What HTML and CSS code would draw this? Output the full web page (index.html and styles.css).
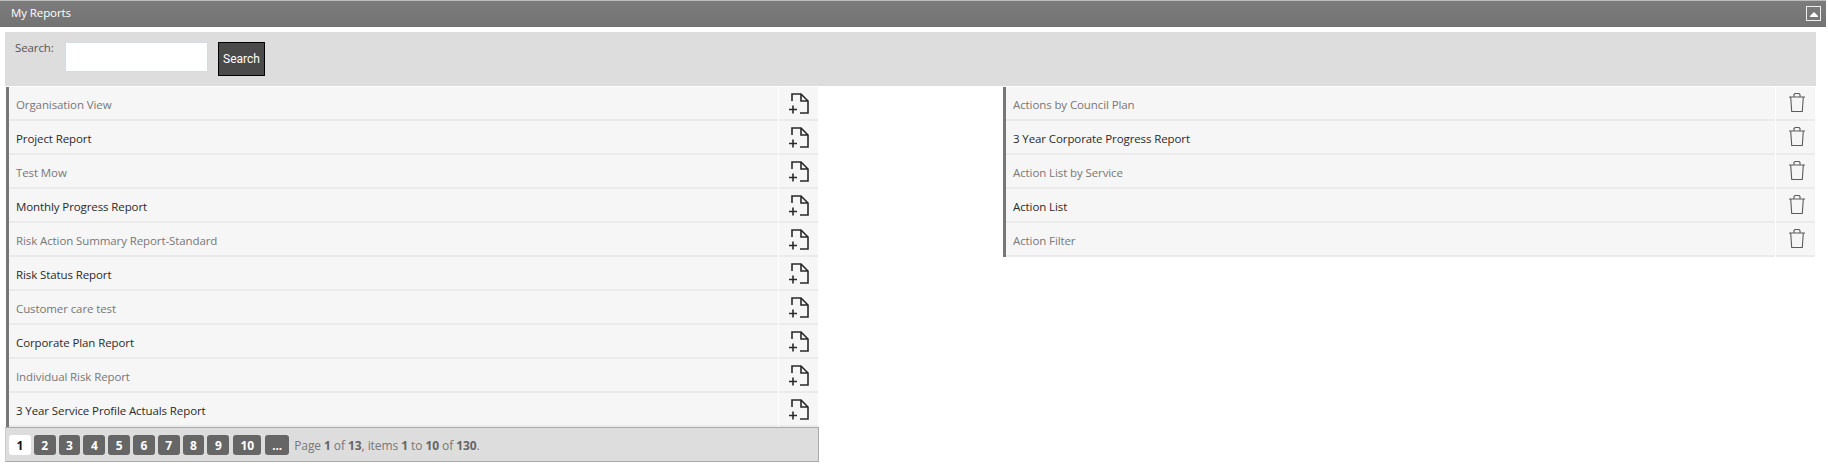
FILE: index.html
```html
<!DOCTYPE html>
<html lang="en">
<head>
<meta charset="utf-8">
<title>My Reports</title>
<link rel="stylesheet" href="styles.css">
</head>
<body>
<svg class="defs" width="0" height="0" aria-hidden="true">
  <symbol id="add" viewBox="0 0 22 22">
    <path d="M4 9V2h9l7 7v12h-8M13 2v7h7M1 17.500h8M5 13.500v8" fill="none" stroke="#2a2a2a" stroke-width="1.600"/>
  </symbol>
  <symbol id="bin" viewBox="0 0 18 21">
    <path d="M1 5h16M6 5V2.500L7 1.500h4l1 1V5M2.700 5l1 14.500h10.600l1-14.500" fill="none" stroke="#5c5c5c" stroke-width="1.100"/>
  </symbol>
</svg>
<header class="bar">
  <span class="bar-title">My Reports</span>
  <span class="collapse"><span class="caret"></span></span>
</header>
<section class="search">
  <label class="search-label" for="q">Search:</label>
  <input class="search-input" id="q" type="text">
  <button class="search-btn" type="button">Search</button>
</section>
<main class="columns">
  <div class="col">
    <ul class="list">
      <li class="row"><span class="name alt">Organisation View</span><span class="cell"><svg class="i-add"><use href="#add"/></svg></span></li>
      <li class="row"><span class="name">Project Report</span><span class="cell"><svg class="i-add"><use href="#add"/></svg></span></li>
      <li class="row"><span class="name alt">Test Mow</span><span class="cell"><svg class="i-add"><use href="#add"/></svg></span></li>
      <li class="row"><span class="name">Monthly Progress Report</span><span class="cell"><svg class="i-add"><use href="#add"/></svg></span></li>
      <li class="row"><span class="name alt">Risk Action Summary Report-Standard</span><span class="cell"><svg class="i-add"><use href="#add"/></svg></span></li>
      <li class="row"><span class="name">Risk Status Report</span><span class="cell"><svg class="i-add"><use href="#add"/></svg></span></li>
      <li class="row"><span class="name alt">Customer care test</span><span class="cell"><svg class="i-add"><use href="#add"/></svg></span></li>
      <li class="row"><span class="name">Corporate Plan Report</span><span class="cell"><svg class="i-add"><use href="#add"/></svg></span></li>
      <li class="row"><span class="name alt">Individual Risk Report</span><span class="cell"><svg class="i-add"><use href="#add"/></svg></span></li>
      <li class="row"><span class="name">3 Year Service Profile Actuals Report</span><span class="cell"><svg class="i-add"><use href="#add"/></svg></span></li>
    </ul>
    <nav class="pager">
      <span class="pg current">1</span>
      <span class="pg">2</span><span class="pg">3</span><span class="pg">4</span><span class="pg">5</span>
      <span class="pg">6</span><span class="pg">7</span><span class="pg">8</span><span class="pg">9</span>
      <span class="pg wide">10</span><span class="pg more">...</span>
      <span class="pg-info">Page <b>1</b> of <b>13</b>, items <b>1</b> to <b>10</b> of <b>130</b>.</span>
    </nav>
  </div>
  <div class="col">
    <ul class="list">
      <li class="row"><span class="name alt">Actions by Council Plan</span><span class="cell"><svg class="i-bin"><use href="#bin"/></svg></span></li>
      <li class="row"><span class="name">3 Year Corporate Progress Report</span><span class="cell"><svg class="i-bin"><use href="#bin"/></svg></span></li>
      <li class="row"><span class="name alt">Action List by Service</span><span class="cell"><svg class="i-bin"><use href="#bin"/></svg></span></li>
      <li class="row"><span class="name">Action List</span><span class="cell"><svg class="i-bin"><use href="#bin"/></svg></span></li>
      <li class="row"><span class="name alt">Action Filter</span><span class="cell"><svg class="i-bin"><use href="#bin"/></svg></span></li>
    </ul>
  </div>
</main>
</body>
</html>
```
FILE: styles.css
```css
* { box-sizing: border-box; }
html, body { margin: 0; padding: 0; background: #fff; }
body {
  width: 1828px;
  height: 471px;
  overflow: hidden;
  font-family: "Open Sans", "Noto Sans", sans-serif;
  font-size: 11.5px;
  letter-spacing: -0.1px;
  color: #222;
  padding-top: 1px;
}
.defs { position: absolute; }
.bar {
  height: 26px;
  width: 1826px;
  background: linear-gradient(#7c7c7c, #737373);
  display: flex;
  align-items: center;
  justify-content: space-between;
  padding: 0 5px 1px 11px;
  color: #fff;
  box-shadow: 0 -1px 0 #bbb;
}
.bar-title { margin-top: -2px; }
.collapse {
  width: 15px;
  height: 15px;
  border: 1px solid #eee;
  display: flex;
  align-items: center;
  justify-content: center;
}
.caret {
  width: 0;
  height: 0;
  border-left: 4px solid transparent;
  border-right: 4px solid transparent;
  border-bottom: 4px solid #fff;
  box-shadow: 0 1px 0 #fff;
}
.search {
  margin: 5px 0 0 5px;
  width: 1811px;
  height: 54px;
  background: #ddd;
  display: flex;
  align-items: flex-start;
  padding: 10px 0 0 10px;
}
.search-label { color: #555; width: 50px; margin-top: -2px; }
.search-input {
  width: 143px;
  height: 30px;
  margin: 0 10px 0 0;
  border: 1px solid #d3dbe6;
  background: #fff;
}
.search-btn {
  width: 47px;
  height: 34px;
  background: #4a4a4a;
  border: 1px solid #000;
  color: #fff;
  font-family: Roboto, sans-serif;
  font-size: 12px;
  letter-spacing: 0;
  padding: 0;
}
.columns {
  display: grid;
  grid-template-columns: 814px 812px;
  column-gap: 183px;
  padding-left: 6px;
}
.list { list-style: none; margin: 0; padding: 1px 0 0; width: 812px; }
.row {
  height: 34px;
  display: flex;
  border-left: 3px solid #777;
  background: #fff;
}
.name {
  flex: 1;
  height: 32px;
  background: #f6f6f6;
  padding-left: 7px;
  line-height: 36px;
  color: #2a2a2a;
  box-shadow: 0 2px 0 #ebebeb;
  margin-right: 1px;
}
.name.alt { color: #777; }
.cell {
  width: 39px;
  height: 32px;
  background: #f6f6f6;
  box-shadow: 0 2px 0 #ebebeb;
  display: flex;
  align-items: center;
  justify-content: center;
}
.i-add { width: 22px; height: 22px; }
.i-bin { width: 18px; height: 21px; margin: 0 0 2px 3px; }
.pager {
  width: 814px;
  height: 35px;
  margin-left: -1px;
  background: #ddd;
  border: 1px solid #aaa;
  border-left-color: #ccc;
  display: flex;
  align-items: center;
  gap: 3px;
  padding: 1px 0 0 3px;
  color: #777;
  font-size: 12px;
  letter-spacing: -0.08px;
}
.pg {
  width: 21.800px;
  height: 20px;
  background: #666;
  color: #fff;
  border-radius: 3px;
  font-weight: 700;
  display: flex;
  align-items: center;
  justify-content: center;
}
.pg.current { background: #fff; color: #111; }
.pg.wide { width: 28px; margin-left: 1px; }
.pg.more { width: 24px; margin-left: 1px; }
.pg-info { margin-left: 2px; }
.pg-info b { color: #666; font-weight: 700; }
```
